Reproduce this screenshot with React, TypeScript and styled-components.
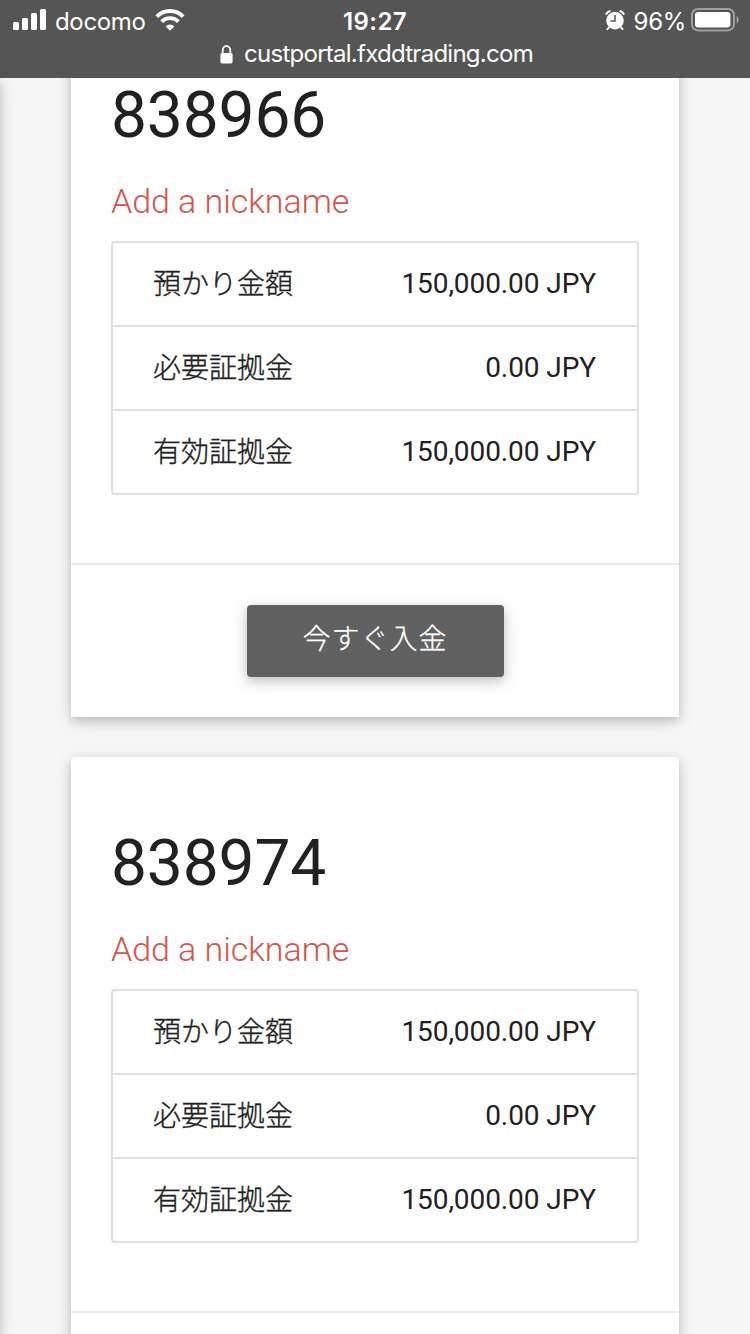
import React from "react";
import styled, { createGlobalStyle } from "styled-components";

const GlobalStyle = createGlobalStyle`
  *, *::before, *::after { box-sizing: border-box; }
  body { margin: 0; background: #f7f7f7; overflow: hidden; }
`;

const Screen = styled.div`
  display: flex;
  flex-direction: column;
  width: 750px;
  height: 1334px;
  overflow: hidden;
  background: #f7f7f7;
  color: #212121;
  font-family: Roboto, "Noto Sans CJK JP", sans-serif;
`;

const TopBar = styled.header`
  flex: none;
  height: 78px;
  background: #555555;
  color: #fff;
  font-family: Inter, sans-serif;
`;

const StatusRow = styled.div`
  display: grid;
  grid-template-columns: 1fr auto 1fr;
  align-items: center;
  height: 40px;
  padding: 0 11px 0 13px;
`;

const StatusGroup = styled.div<{ $end?: boolean }>`
  display: flex;
  align-items: center;
  justify-content: ${(p) => (p.$end ? "flex-end" : "flex-start")};
`;

const StatusText = styled.span`
  padding-top: 3px;
  font-size: 24px;
  line-height: 37px;
`;

const Carrier = styled(StatusText)`
  margin: 0 9px 0 8px;
  letter-spacing: -0.35px;
`;

const Clock = styled(StatusText)`
  margin-right: 2px;
  font-weight: 600;
  letter-spacing: 0.4px;
`;

const Percent = styled(StatusText)`
  margin: 0 5px 0 9px;
  letter-spacing: -0.3px;
`;

const AddressRow = styled.div`
  display: flex;
  align-items: center;
  justify-content: center;
  gap: 11px;
  height: 28px;
  padding-left: 3px;
  font-size: 24px;
  line-height: 28px;
  letter-spacing: -0.74px;
`;

const Viewport = styled.main`
  position: relative;
  flex: 1;
  min-height: 0;
  overflow: hidden;
`;

const DrawerEdge = styled.div`
  position: absolute;
  top: 0;
  bottom: 0;
  left: -20px;
  width: 20px;
  box-shadow: 0 4px 10px rgba(0, 0, 0, 0.16), 0 4px 20px rgba(0, 0, 0, 0.12);
`;

const CardList = styled.div`
  display: flex;
  flex-direction: column;
  gap: 40px;
  margin: -69px 71px 0;
`;

const Card = styled.section`
  flex: none;
  background: #fff;
  border-radius: 4px 4px 0 0;
  box-shadow: 0 4px 10px rgba(0, 0, 0, 0.16), 0 4px 20px rgba(0, 0, 0, 0.12);
`;

const CardContent = styled.div`
  padding: 40px 40px 68px;
`;

const AccountNumber = styled.h2`
  margin: 0;
  font-size: 64px;
  font-weight: 400;
  line-height: 134px;
  letter-spacing: -0.1px;
`;

const NicknameLink = styled.a`
  display: block;
  margin-bottom: 21px;
  color: #d0574a;
  font-size: 34px;
  font-weight: 300;
  line-height: 37px;
  letter-spacing: -0.05px;
`;

const BalanceList = styled.dl`
  margin: 0;
  border: 2px solid #e0e0e0;
  border-radius: 4px;
`;

const BalanceRow = styled.div`
  display: flex;
  align-items: flex-start;
  justify-content: space-between;
  height: 82px;
  padding: 0 41px 0 40px;
  font-size: 28px;

  & + & {
    height: 84px;
    border-top: 2px solid #e0e0e0;
  }
`;

const Label = styled.dt`
  font-family: "Noto Sans CJK JP", sans-serif;
  font-weight: 300;
  line-height: 78px;
  -webkit-text-stroke: 0.35px currentColor;
`;

const Amount = styled.dd`
  margin: 0;
  line-height: 82px;
  letter-spacing: -0.08px;
`;

const CardAction = styled.div`
  display: flex;
  justify-content: center;
  height: 154px;
  padding: 40px;
  border-top: 2px solid #ebebeb;
`;

const DepositButton = styled.button`
  width: 257px;
  height: 72px;
  padding: 0 0 8px;
  border: 0;
  border-radius: 4px;
  background: #616161;
  color: #fff;
  font-family: "Noto Sans CJK JP", sans-serif;
  font-size: 28px;
  font-weight: 300;
  letter-spacing: 1px;
  -webkit-text-stroke: 0.3px currentColor;
  box-shadow: 0 4px 10px rgba(0, 0, 0, 0.16), 0 4px 20px rgba(0, 0, 0, 0.12);
`;

const SignalIcon = () => (
  <svg width="34" height="22" viewBox="0 0 34 22" fill="#fff">
    <rect x="0" y="13" width="6" height="8" rx="1.5" />
    <rect x="9" y="9" width="6" height="12" rx="1.5" />
    <rect x="18" y="4" width="6" height="17" rx="1.5" />
    <rect x="27" y="0" width="6" height="21" rx="1.5" />
  </svg>
);

const WifiIcon = () => (
  <svg width="30" height="22" viewBox="0 0 30 22" fill="none" stroke="#fff">
    <path d="M1.8 7.6A18.6 18.6 0 0 1 28.2 7.6" strokeWidth="4" />
    <path d="M6.6 12.6A11.8 11.8 0 0 1 23.4 12.6" strokeWidth="3.8" />
    <path d="M10.6 17.4a6.3 6.3 0 0 1 8.8 0L15 21.8z" fill="#fff" stroke="none" />
  </svg>
);

const AlarmIcon = () => (
  <svg width="20" height="21" viewBox="0 0 20 21" fill="none" stroke="#fff">
    <circle cx="10" cy="10.6" r="8.8" fill="#fff" stroke="none" />
    <path d="M1.4 3.8Q2.2 1.8 4.6 1.2M18.6 3.8Q17.8 1.8 15.4 1.2" strokeWidth="2.2" strokeLinecap="round" />
    <path d="M3.8 17.6L2.4 19.2M16.2 17.6l1.4 1.6" strokeWidth="1.8" strokeLinecap="round" />
    <path d="M10 5v6H5.4" stroke="#555555" strokeWidth="1.5" />
  </svg>
);

const BatteryIcon = () => (
  <svg width="48" height="24" viewBox="0 0 48 24">
    <rect x="1" y="1" width="42" height="21.4" rx="6" fill="none" stroke="#a0a0a0" strokeWidth="2" />
    <rect x="4" y="4" width="35.4" height="15.4" rx="3.2" fill="#fff" />
    <path d="M45.6 8q2.2 1.2 2.2 3.8t-2.2 3.8z" fill="#a0a0a0" />
  </svg>
);

const LockIcon = () => (
  <svg width="13" height="19" viewBox="0 0 13 19">
    <rect x="0.4" y="8" width="12.2" height="10.4" rx="1.6" fill="#fff" />
    <path d="M2.7 9V5.2a3.8 4.2 0 0 1 7.6 0V9" fill="none" stroke="#fff" strokeWidth="1.8" />
  </svg>
);

const accounts = [
  { id: "838966", deposit: "150,000.00 JPY", required: "0.00 JPY", available: "150,000.00 JPY", action: "今すぐ入金" },
  { id: "838974", deposit: "150,000.00 JPY", required: "0.00 JPY", available: "150,000.00 JPY" },
];

export default function App() {
  return (
    <>
      <GlobalStyle />
      <Screen>
        <TopBar>
          <StatusRow>
            <StatusGroup>
              <SignalIcon />
              <Carrier>docomo</Carrier>
              <WifiIcon />
            </StatusGroup>
            <Clock>19:27</Clock>
            <StatusGroup $end>
              <AlarmIcon />
              <Percent>96%</Percent>
              <BatteryIcon />
            </StatusGroup>
          </StatusRow>
          <AddressRow>
            <LockIcon />
            <span>custportal.fxddtrading.com</span>
          </AddressRow>
        </TopBar>
        <Viewport>
          <CardList>
            {accounts.map((a) => (
              <Card key={a.id}>
                <CardContent>
                  <AccountNumber>{a.id}</AccountNumber>
                  <NicknameLink>Add a nickname</NicknameLink>
                  <BalanceList>
                    <BalanceRow>
                      <Label>預かり金額</Label>
                      <Amount>{a.deposit}</Amount>
                    </BalanceRow>
                    <BalanceRow>
                      <Label>必要証拠金</Label>
                      <Amount>{a.required}</Amount>
                    </BalanceRow>
                    <BalanceRow>
                      <Label>有効証拠金</Label>
                      <Amount>{a.available}</Amount>
                    </BalanceRow>
                  </BalanceList>
                </CardContent>
                <CardAction>{a.action && <DepositButton>{a.action}</DepositButton>}</CardAction>
              </Card>
            ))}
          </CardList>
          <DrawerEdge />
        </Viewport>
      </Screen>
    </>
  );
}
